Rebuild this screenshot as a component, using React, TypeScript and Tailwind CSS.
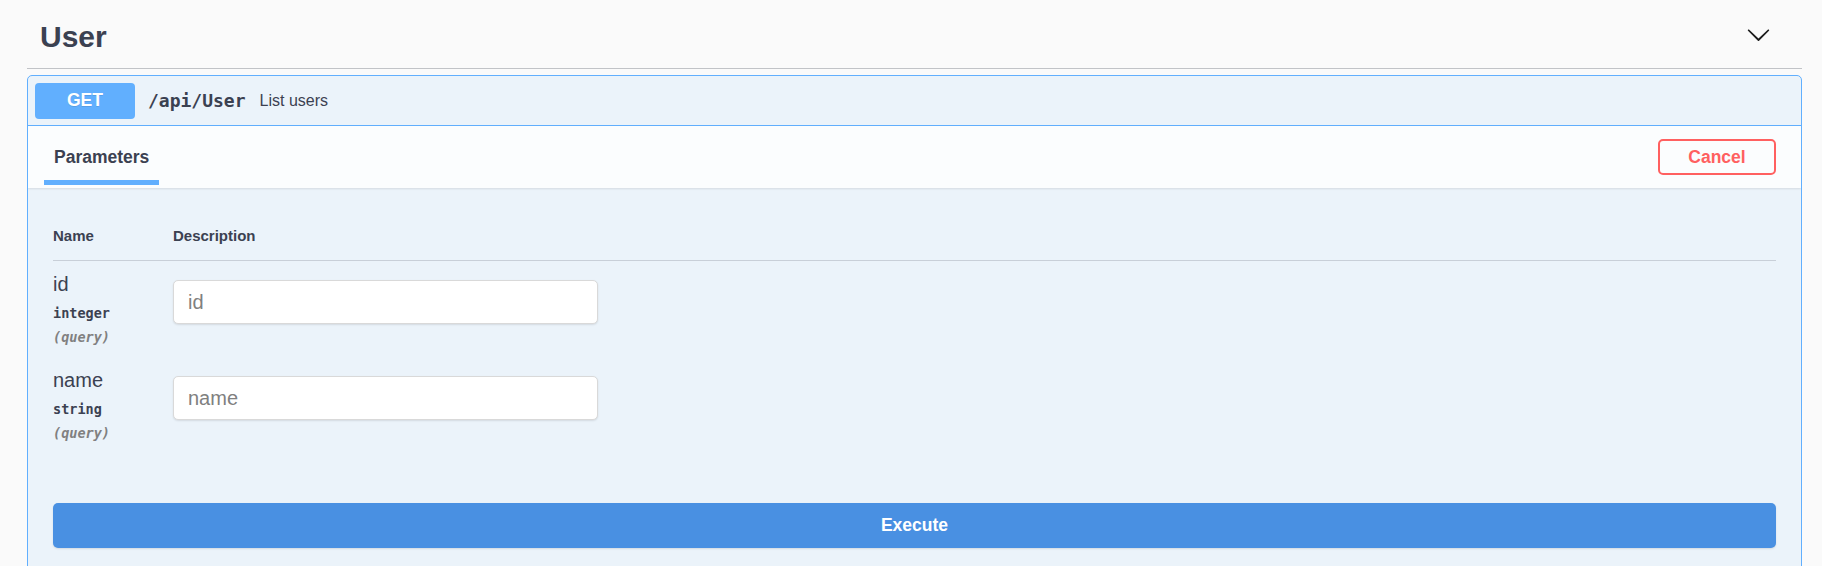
const sans = "font-['Liberation_Sans',Arial,sans-serif]"
const mono = "font-['DejaVu_Sans_Mono','Liberation_Mono',monospace]"

type Param = { name: string; type: string; where: string }

const params: Param[] = [
  { name: "id", type: "integer", where: "query" },
  { name: "name", type: "string", where: "query" },
]

function Chevron() {
  return (
    <svg width="25" height="25" viewBox="0 0 20 20" className="text-[#1b1b1b]">
      <path
        fill="currentColor"
        d="M17.418 6.109c.272-.268.709-.268.979 0s.271.701 0 .969l-7.908 7.83c-.27.268-.707.268-.979 0l-7.908-7.83c-.27-.268-.27-.701 0-.969.271-.268.709-.268.979 0L10 13.25l7.418-7.141z"
      />
    </svg>
  )
}

function ParamRow({ p }: { p: Param }) {
  return (
    <div className="flex pt-[12px] pb-[8px]">
      <div className="w-[120px] shrink-0">
        <div className="text-[20px] leading-[22px] text-[#3b4151]">{p.name}</div>
        <div className={`${mono} mt-[6px] text-[13.5px] leading-[24px] font-bold text-[#3b4151]`}>{p.type}</div>
        <div className={`${mono} text-[13.5px] leading-[24px] italic font-semibold text-[#808080]`}>({p.where})</div>
      </div>
      <input
        placeholder={p.name}
        className="mt-[7px] h-[44px] w-[425px] rounded-[5px] border border-[#d9d9d9] bg-white pl-[14px] text-[20px] text-[#3b4151] shadow-[0_1px_2px_rgba(0,0,0,0.1)] outline-none placeholder:text-[#808080]"
      />
    </div>
  )
}

export default function App() {
  return (
    <div className={`${sans} min-h-screen bg-[#fafafa] pl-[27px] pr-[20px] text-[#3b4151]`}>
      <div className="flex h-[69px] items-start justify-between border-b border-[#c1c3c7]">
        <h3 className="pl-[13px] pt-[22px] text-[30px] leading-[30px] font-bold text-[#3b4151]">User</h3>
        <div className="mr-[31px] mt-[22px]">
          <Chevron />
        </div>
      </div>

      <div className="mt-[6px] overflow-hidden rounded-[5px] border border-[#61affe] bg-[#ebf3fa]">
        <div className="flex h-[50px] items-center border-b border-[#61affe] pl-[7px]">
          <span className="flex h-[36px] w-[100px] items-center justify-center rounded-[4px] bg-[#61affe] text-[17.5px] font-bold text-white [text-shadow:0_1px_0_rgba(0,0,0,0.1)]">
            GET
          </span>
          <span className={`${mono} ml-[13px] text-[18px] font-bold text-[#3b4151]`}>/api/User</span>
          <span className="ml-[14px] text-[16px] text-[#3b4151]">List users</span>
        </div>

        <div className="flex h-[62px] items-center bg-white/80 shadow-[0_1px_2px_rgba(0,0,0,0.1)]">
          <div className="relative ml-[16px] flex h-full items-center px-[10px]">
            <h4 className="text-[17.5px] font-bold text-[#3b4151]">Parameters</h4>
            <span className="absolute bottom-[3px] left-0 right-0 h-[5px] bg-[#61affe]" />
          </div>
          <button className="ml-auto mr-[25px] h-[36px] w-[118px] rounded-[5px] border-2 border-[#ff6060] text-[17.5px] font-bold text-[#ff6060]">
            Cancel
          </button>
        </div>

        <div className="pl-[25px] pr-[25px] pt-[24px] pb-[25px]">
          <div className="flex h-[49px] items-center border-b border-[#c8cfd8] text-[15px] font-bold text-[#3b4151]">
            <div className="w-[120px]">Name</div>
            <div>Description</div>
          </div>
          {params.map((p) => (
            <ParamRow key={p.name} p={p} />
          ))}
          <button className="mt-[50px] h-[45px] w-full rounded-[5px] bg-[#4990e2] text-[17.5px] font-bold text-white shadow-[0_1px_2px_rgba(0,0,0,0.1)]">
            Execute
          </button>
        </div>
      </div>
    </div>
  )
}
